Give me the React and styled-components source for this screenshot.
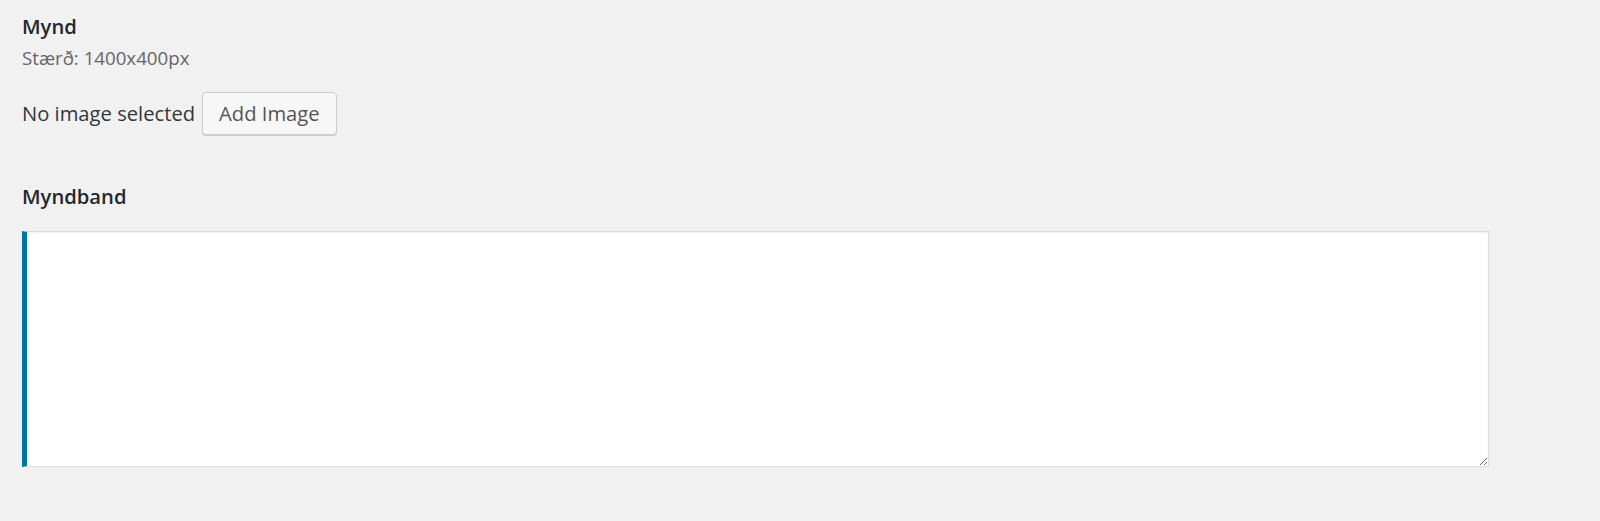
import React from 'react';
import styled, { createGlobalStyle } from 'styled-components';

const GlobalStyle = createGlobalStyle`
  html, body {
    margin: 0;
    padding: 0;
    background: #f1f1f1;
  }
  body {
    font-family: 'Open Sans', 'Liberation Sans', sans-serif;
    color: #444;
  }
`;

const Page = styled.div`
  min-height: 521px;
  padding: 12px 0 0 22px;
  box-sizing: border-box;
`;

const Field = styled.div`
  margin-bottom: ${(p) => p.$gap || 0}px;
`;

const Label = styled.div`
  font-size: 20.2px;
  line-height: 28px;
  font-weight: 600;
  color: #23282d;
  margin-bottom: ${(p) => p.$below || 0}px;
`;

const Description = styled.p`
  margin: 5px 0 0;
  font-size: 18.7px;
  line-height: 26px;
  color: #666;
`;

const Uploader = styled.div`
  display: flex;
  align-items: baseline;
  gap: 7px;
  margin-top: 21px;
  font-size: 20.2px;
  color: #32373c;
`;

const Button = styled.button`
  height: 43px;
  padding: 0 16px;
  font-family: inherit;
  font-size: 20.2px;
  line-height: 41px;
  color: #555;
  background: #f7f7f7;
  border: 1px solid #ccc;
  border-radius: 4px;
  box-shadow: 0 1px 0 #ccc;
  cursor: pointer;
`;

const TextArea = styled.textarea`
  display: block;
  width: 1467px;
  height: 236px;
  box-sizing: border-box;
  background: #fff;
  border: 1px solid #ddd;
  border-left: 5px solid #0073aa;
  box-shadow: inset 0 1px 2px rgba(0, 0, 0, 0.07);
  font-family: inherit;
  font-size: 18px;
  outline: none;
`;

export default function App() {
  return (
    <>
      <GlobalStyle />
      <Page>
        <Field $gap={47}>
          <Label>Mynd</Label>
          <Description>Stærð: 1400x400px</Description>
          <Uploader>
            <span>No image selected</span>
            <Button type="button">Add Image</Button>
          </Uploader>
        </Field>
        <Field>
          <Label $below={21}>Myndband</Label>
          <TextArea />
        </Field>
      </Page>
    </>
  );
}
